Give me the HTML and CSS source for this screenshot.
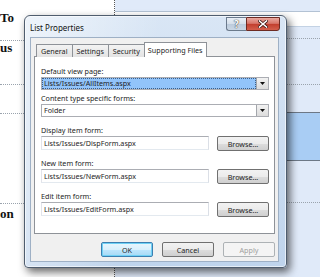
FILE: index.html
```html
<!DOCTYPE html>
<html lang="en">
<head>
  <meta charset="UTF-8" />
  <title>List Properties</title>
  <link rel="stylesheet" href="styles.css">
</head>
<body>

  <div class="desktop">
    <aside class="nav">
      <div class="nav-row row-to">To</div>
      <div class="nav-row row-us">us</div>
      <div class="nav-row row-gap"></div>
      <div class="nav-row row-long"></div>
      <div class="nav-row row-on">on</div>
    </aside>
    <main class="pane">
      <div class="pane-top"></div>
      <div class="pane-head"></div>
      <div class="pane-row row-a"></div>
      <div class="pane-row row-b"></div>
      <div class="pane-row row-c"></div>
      <div class="pane-row row-sel"></div>
      <div class="pane-row row-d"></div>
      <div class="pane-row row-e"></div>
    </main>
  </div>

  <div class="dialog">
    <div class="titlebar">
      <span class="title">List Properties</span>
      <div class="caption-btns">
        <span class="cap help">?</span>
        <span class="cap close">
          <svg viewBox="0 0 10 8" width="10" height="8">
            <path d="M1.5 1 L8.5 7 M8.5 1 L1.5 7" stroke="#3b1410" stroke-width="3" stroke-linecap="square"/>
            <path d="M1.5 1 L8.5 7 M8.5 1 L1.5 7" stroke="#fff" stroke-width="1.6" stroke-linecap="square"/>
          </svg>
        </span>
      </div>
    </div>

    <div class="client">
      <div class="tabs">
        <span class="tab">General</span>
        <span class="tab">Settings</span>
        <span class="tab">Security</span>
        <span class="tab active">Supporting Files</span>
      </div>

      <div class="panel">
        <div class="field">
          <label>Default view page:</label>
          <div class="combo focused">
            <span class="combo-text">Lists/Issues/AllItems.aspx</span>
            <span class="drop"><svg viewBox="0 0 5 3" width="5" height="3"><path d="M0 0 H5 L2.5 3 Z" fill="#111"/></svg></span>
          </div>
        </div>
        <div class="field near">
          <label>Content type specific forms:</label>
          <div class="combo">
            <span class="combo-text">Folder</span>
            <span class="drop"><svg viewBox="0 0 5 3" width="5" height="3"><path d="M0 0 H5 L2.5 3 Z" fill="#111"/></svg></span>
          </div>
        </div>
        <div class="field after-combo">
          <label>Display item form:</label>
          <div class="input-row">
            <span class="textbox">Lists/Issues/DispForm.aspx</span>
            <button class="btn">Browse...</button>
          </div>
        </div>
        <div class="field">
          <label>New item form:</label>
          <div class="input-row">
            <span class="textbox">Lists/Issues/NewForm.aspx</span>
            <button class="btn">Browse...</button>
          </div>
        </div>
        <div class="field">
          <label>Edit item form:</label>
          <div class="input-row">
            <span class="textbox">Lists/Issues/EditForm.aspx</span>
            <button class="btn">Browse...</button>
          </div>
        </div>
      </div>

      <div class="actions">
        <button class="btn default">OK</button>
        <button class="btn">Cancel</button>
        <button class="btn" disabled>Apply</button>
      </div>
    </div>
  </div>

</body>
</html>
```

FILE: styles.css
```css
/* ===== Palette ===== */
:root {
  --page-blue: #e0eaf9;
  --sel-blue: #a9cdf4;
  --rule: #6d7886;
  --dots: #9aa3ad;
  --client: #f0f0f0;
  --panel-border: #8e9298;
  --text: #1e1e1e;
  --ui-font: "Noto Sans", "Open Sans", sans-serif;
}

* { box-sizing: border-box; margin: 0; padding: 0; }

body {
  width: 320px;
  height: 277px;
  overflow: hidden;
  position: relative;
  background: #fff;
  font-family: var(--ui-font);
}

/* ===== Page behind the dialog ===== */
.desktop {
  display: grid;
  grid-template-columns: 115px 1fr;
  height: 277px;
}

.nav {
  display: flex;
  flex-direction: column;
  border-right: 1px dotted #555;
  font-family: "Liberation Serif", serif;
  font-weight: bold;
  font-size: 13px;
  color: #111;
}
.nav-row { border-bottom: 1px dotted var(--dots); }
.row-to { height: 41px; padding-top: 10px; }
.row-us { height: 44px; padding-top: 0; line-height: 14px; }
.row-gap { height: 29px; }
.row-long { height: 90px; }
.row-on { border-bottom: 0; padding-top: 2px; }

.pane {
  display: flex;
  flex-direction: column;
  background: var(--page-blue);
}
.pane-top { height: 12px; border-bottom: 1px solid #b3c2d4; }
.pane-head { height: 15px; background: #fff; border-bottom: 1px solid #c3d2e4; }
.pane-row { border-bottom: 1px dotted var(--dots); }
.row-a { height: 12px; }
.row-b { height: 46px; }
.row-c { height: 28px; border-bottom: 1px solid var(--rule); }
.row-sel { height: 48px; background: var(--sel-blue); border-bottom: 1px solid var(--rule); }
.row-d { height: 42px; }
.row-e { flex: 1; border-bottom: 0; }

/* ===== Dialog window ===== */
.dialog {
  position: absolute;
  left: 24px;
  top: 15px;
  width: 263px;
  height: 253px;
  display: flex;
  flex-direction: column;
  padding: 0 7px 5px 5px;
  border: 1px solid #4f5d6e;
  border-radius: 6px 6px 4px 4px;
  background:
    linear-gradient(100deg, rgba(255,255,255,0.55) 0%, rgba(255,255,255,0) 45%),
    linear-gradient(to bottom, #d9e6f5, #bfd4ec);
  box-shadow: 3px 4px 9px rgba(0,0,0,0.6), inset 0 0 0 1px rgba(255,255,255,0.6);
}

.titlebar {
  height: 21px;
  display: flex;
  align-items: center;
  justify-content: space-between;
}
.title {
  font-size: 8px;
  color: #111;
  padding-top: 1px;
}
.caption-btns {
  align-self: flex-start;
  display: flex;
  margin-top: 1px;
  margin-right: -1px;
}
.cap {
  height: 14px;
  display: flex;
  align-items: center;
  justify-content: center;
  border: 1px solid #6b7a8c;
}
.help {
  width: 20px;
  border-right: 0;
  border-radius: 0 0 0 3px;
  background: linear-gradient(to bottom, #e9eff6 0%, #d5dfea 50%, #bccbdc 51%, #cad7e5 100%);
  font-size: 10px;
  font-weight: bold;
  color: #fff;
  text-shadow: 0 0 1px #333, 0 0 1px #333;
}
.close {
  width: 34px;
  border-color: #6e2b22;
  border-radius: 0 0 3px 0;
  background: linear-gradient(to bottom, #eaa99f 0%, #d8766a 45%, #c23f2e 52%, #d35f4c 100%);
}

.client {
  flex: 1;
  display: flex;
  flex-direction: column;
  background: var(--client);
  border: 1px solid #9eb0c5;
  padding: 4px 3px 4px;
  font-size: 7.2px;
  color: var(--text);
}

/* Tabs */
.tabs {
  display: flex;
  align-items: flex-end;
  height: 15px;
  padding-left: 2px;
  margin-bottom: -1px;
  position: relative;
  z-index: 1;
}
.tab {
  height: 13px;
  padding: 0 4px;
  display: flex;
  align-items: center;
  border: 1px solid var(--panel-border);
  border-bottom: 0;
  margin-right: -1px;
  background: linear-gradient(to bottom, #f3f3f3, #e3e3e3);
}
.tab.active {
  height: 15px;
  padding: 0 3px 1px;
  background: #fff;
}

.panel {
  height: 178px;
  background: #fff;
  border: 1px solid var(--panel-border);
  padding: 9px 5px 0 6px;
  display: flex;
  flex-direction: column;
}

.field {
  display: flex;
  flex-direction: column;
  gap: 1px;
  margin-top: 7px;
}
.field:first-child { margin-top: 0; }
.field.near { margin-top: 3px; }
.field.after-combo { margin-top: 8px; }
.field label { height: 10px; line-height: 10px; }

.combo {
  height: 13px;
  display: flex;
  border: 1px solid #abadb3;
  background: #fff;
}
.combo-text {
  flex: 1;
  padding-left: 2px;
  line-height: 11px;
}
.combo.focused .combo-text {
  background: #92c4fa;
  outline: 1px dotted #3b5f8a;
  outline-offset: -1px;
}
.drop {
  width: 12px;
  display: flex;
  align-items: center;
  justify-content: center;
  border-left: 1px solid #a3a6ab;
  background: linear-gradient(to bottom, #f2f2f2, #dcdcdc);
}

.input-row {
  display: flex;
  gap: 8px;
}
.textbox {
  width: 168px;
  height: 14px;
  line-height: 12px;
  padding-left: 2px;
  border: 1px solid #abadb3;
  border-color: #abadb3 #dbdfe6 #e3e9ef #e2e3ea;
}

/* Buttons */
.btn {
  width: 52px;
  height: 15px;
  font-family: var(--ui-font);
  font-size: 7.2px;
  color: #1e1e1e;
  border: 1px solid #707070;
  border-radius: 2px;
  background: linear-gradient(to bottom, #f2f2f2 0%, #ebebeb 50%, #dddddd 51%, #cfcfcf 100%);
}
.btn.default {
  border-color: #3c7fb1;
  box-shadow: inset 0 0 0 1px #6fd1f5;
  background: linear-gradient(to bottom, #eaf6fd 0%, #d9f0fc 50%, #bee6fd 51%, #a7d9f5 100%);
}
.btn:disabled {
  border-color: #adb2b5;
  background: #f4f4f4;
  color: #a0a0a0;
}

.actions {
  margin-top: auto;
  display: flex;
  justify-content: flex-end;
  gap: 9px;
}
```
